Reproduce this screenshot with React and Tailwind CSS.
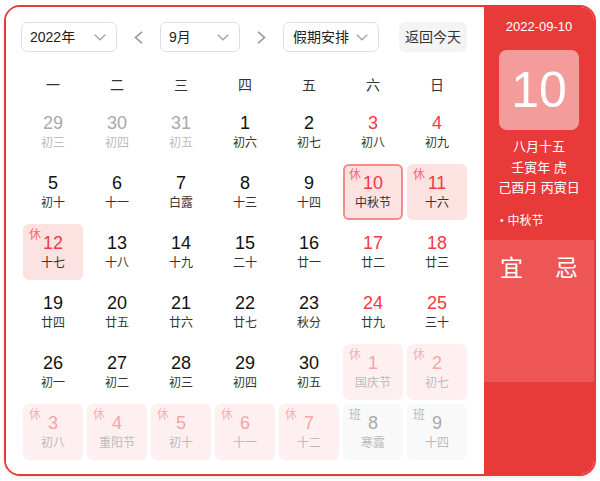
import React from "react";

const FONT = { fontFamily: '"Liberation Sans", "Noto Sans CJK SC", sans-serif' };

// kind: prev | normal | weekend | hol | sel | nextHol | work
const weeks = [
  [
    [29, "初三", "prev"], [30, "初四", "prev"], [31, "初五", "prev"],
    [1, "初六", "normal"], [2, "初七", "normal"], [3, "初八", "weekend"], [4, "初九", "weekend"],
  ],
  [
    [5, "初十", "normal"], [6, "十一", "normal"], [7, "白露", "normal"], [8, "十三", "normal"],
    [9, "十四", "normal"], [10, "中秋节", "sel"], [11, "十六", "hol"],
  ],
  [
    [12, "十七", "hol"], [13, "十八", "normal"], [14, "十九", "normal"], [15, "二十", "normal"],
    [16, "廿一", "normal"], [17, "廿二", "weekend"], [18, "廿三", "weekend"],
  ],
  [
    [19, "廿四", "normal"], [20, "廿五", "normal"], [21, "廿六", "normal"], [22, "廿七", "normal"],
    [23, "秋分", "normal"], [24, "廿九", "weekend"], [25, "三十", "weekend"],
  ],
  [
    [26, "初一", "normal"], [27, "初二", "normal"], [28, "初三", "normal"], [29, "初四", "normal"],
    [30, "初五", "normal"], [1, "国庆节", "nextHol"], [2, "初七", "nextHol"],
  ],
  [
    [3, "初八", "nextHol"], [4, "重阳节", "nextHol"], [5, "初十", "nextHol"], [6, "十一", "nextHol"],
    [7, "十二", "nextHol"], [8, "寒露", "work"], [9, "十四", "work"],
  ],
];

const styles = {
  prev: { cell: "", num: "text-[#aaaaaa]", lunar: "text-[#bbbbbb]" },
  normal: { cell: "", num: "text-[#111111]", lunar: "text-[#333333]" },
  weekend: { cell: "", num: "text-[#f23a3f]", lunar: "text-[#333333]" },
  hol: { cell: "bg-[#fde2e2]", num: "text-[#f23a3f]", lunar: "text-[#333333]", tag: "休", tagCls: "text-[#f56c6c]" },
  sel: {
    cell: "bg-[#fde2e2] ring-2 ring-inset ring-[#f28b8b]",
    num: "text-[#f23a3f]",
    lunar: "text-[#333333]",
    tag: "休",
    tagCls: "text-[#f56c6c]",
  },
  nextHol: { cell: "bg-[#fef0f0]", num: "text-[#f8a4a4]", lunar: "text-[#bbbbbb]", tag: "休", tagCls: "text-[#f8b0b0]" },
  work: { cell: "bg-[#f9f9f9]", num: "text-[#aaaaaa]", lunar: "text-[#bbbbbb]", tag: "班", tagCls: "text-[#bbbbbb]" },
};

function Chevron() {
  return (
    <svg width="12" height="7" viewBox="0 0 12 7" fill="none">
      <polyline points="0.7,0.7 6,5.8 11.3,0.7" stroke="#a0a3ab" strokeWidth="1.3" />
    </svg>
  );
}

function Arrow({ dir }) {
  const pts = dir === "left" ? "8,0.8 1.5,6.5 8,12.2" : "1,0.8 7.5,6.5 1,12.2";
  return (
    <svg width="9" height="13" viewBox="0 0 9 13" fill="none">
      <polyline points={pts} stroke="#8a8e99" strokeWidth="1.5" />
    </svg>
  );
}

function Select({ label, width, pl }) {
  return (
    <div
      className={`${width} h-[30px] flex items-center justify-between border border-[#dcdfe6] rounded-[6px] ${pl} pr-[10px] bg-white`}
    >
      <span className="text-[14px] text-[#222222] leading-none">{label}</span>
      <Chevron />
    </div>
  );
}

function Day({ n, lunar, kind }) {
  const s = styles[kind];
  return (
    <div className={`relative h-[56px] rounded-[6px] flex flex-col items-center pt-[8px] ${s.cell}`}>
      {s.tag && (
        <span className={`absolute top-[4px] left-[6px] text-[12px] leading-[14px] ${s.tagCls}`}>{s.tag}</span>
      )}
      <span className={`text-[18px] leading-[22px] ${s.num}`}>{n}</span>
      <span className={`text-[12px] leading-[16px] mt-[1px] ${s.lunar}`}>{lunar}</span>
    </div>
  );
}

export default function App() {
  return (
    <div className="w-[600px] h-[481px] bg-white pt-[5px] pl-[4px]" style={FONT}>
      <div className="w-[592px] h-[471px] border-2 border-[#e93a3a] rounded-[16px] overflow-hidden flex shadow-[0_2px_4px_rgba(0,0,0,0.08)]">
        {/* calendar body */}
        <div className="flex-1 bg-white pt-[15px] pl-[15px] pr-[17px]">
          <div className="flex items-center h-[30px]">
            <Select label="2022年" width="w-[96px]" pl="pl-[8px]" />
            <div className="w-[43px] flex justify-center">
              <Arrow dir="left" />
            </div>
            <Select label="9月" width="w-[80px]" pl="pl-[8px]" />
            <div className="w-[43px] flex justify-center">
              <Arrow dir="right" />
            </div>
            <Select label="假期安排" width="w-[96px]" pl="pl-[9px]" />
            <div className="ml-auto w-[68px] h-[30px] rounded-[6px] bg-[#f4f4f5] flex items-center justify-center text-[14px] text-[#333333]">
              返回今天
            </div>
          </div>

          <div className="ml-[2px] mt-[18px] grid grid-cols-[repeat(7,60px)] gap-x-[4px] h-[30px] items-center">
            {["一", "二", "三", "四", "五", "六", "日"].map((d) => (
              <div key={d} className="text-center text-[14px] text-[#333333]">
                {d}
              </div>
            ))}
          </div>

          <div className="ml-[2px] mt-[4px] grid grid-cols-[repeat(7,60px)] gap-[4px]">
            {weeks.flat().map(([n, lunar, kind], i) => (
              <Day key={i} n={n} lunar={lunar} kind={kind} />
            ))}
          </div>
        </div>

        {/* side panel */}
        <div className="w-[110px] bg-[#e93a3a] flex flex-col text-white">
          <div className="pt-[11px] text-center text-[13px] leading-[18px]">2022-09-10</div>
          <div className="mx-auto mt-[14px] w-[80px] h-[80px] rounded-[8px] bg-[#f49c9c] flex items-center justify-center">
            <span className="text-[50px] leading-none">10</span>
          </div>
          <div className="mt-[7px] text-center text-[13px] leading-[20.5px]">
            <div>八月十五</div>
            <div>壬寅年 虎</div>
            <div>己酉月 丙寅日</div>
          </div>
          <div className="mt-[14px] pl-[16px] text-[12px] leading-[16px] flex items-center">
            <span className="text-[10px] mr-[4px]">•</span>
            <span>中秋节</span>
          </div>
          <div className="mt-[11px] h-[142px] bg-[#ee5656] flex pt-[13px]">
            <div className="flex-1 text-center text-[23px] leading-[30px]">宜</div>
            <div className="flex-1 text-center text-[23px] leading-[30px]">忌</div>
          </div>
          <div className="flex-1" />
        </div>
      </div>
    </div>
  );
}
